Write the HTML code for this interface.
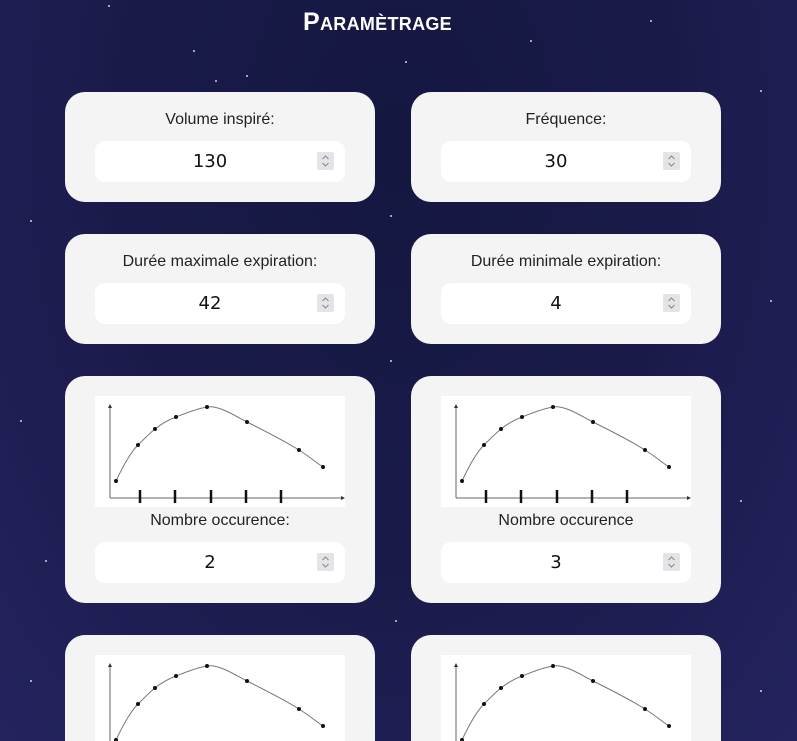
<!DOCTYPE html>
<html><head><meta charset="utf-8"><style>
html,body{margin:0;width:797px;height:741px;overflow:hidden}
body{background:radial-gradient(ellipse at 50% 20%,#141840 0%,#1a1a4a 50%,#24235e 100%);font-family:"Liberation Sans",sans-serif;position:relative}
h1{position:absolute;left:0;width:755px;text-align:center;top:8px;margin:0;color:#fff;font-size:25px;font-variant:small-caps;font-weight:bold;letter-spacing:0.3px}
.card{position:absolute;width:310px;background:#f4f4f4;border-radius:20px;overflow:hidden}
.lbl{text-align:center;font-size:16px;color:#222;position:absolute;left:0;right:0}
.inp{position:absolute;left:30px;width:230px;padding-right:20px;height:41px;background:#fff;border-radius:10px;text-align:center;line-height:41px;font-size:18px;color:#111;font-family:"DejaVu Sans",sans-serif}
.sp{position:absolute;right:11px;top:11px;width:17px;height:18px;background:#e4e4e8;border-radius:2px}
.sp svg{display:block}
.chart{position:absolute;left:30px;top:20px;width:250px;height:111px;background:#fff}
.s{position:absolute;width:2px;height:2px;background:#fff;border-radius:50%;opacity:.8}
</style></head><body>
<h1>Paramètrage</h1>
<div class="s" style="left:108px;top:5px"></div><div class="s" style="left:193px;top:50px"></div><div class="s" style="left:246px;top:75px"></div><div class="s" style="left:215px;top:80px"></div><div class="s" style="left:405px;top:61px"></div><div class="s" style="left:530px;top:40px"></div><div class="s" style="left:650px;top:20px"></div><div class="s" style="left:760px;top:90px"></div><div class="s" style="left:30px;top:220px"></div><div class="s" style="left:390px;top:215px"></div><div class="s" style="left:770px;top:300px"></div><div class="s" style="left:20px;top:420px"></div><div class="s" style="left:740px;top:500px"></div><div class="s" style="left:395px;top:620px"></div><div class="s" style="left:30px;top:680px"></div><div class="s" style="left:760px;top:690px"></div><div class="s" style="left:390px;top:360px"></div><div class="s" style="left:45px;top:560px"></div>

<svg width="0" height="0" style="position:absolute"><defs>
<symbol id="ch" viewBox="0 0 250 111">
<path d="M15 102V10M15 102H248" stroke="#666" stroke-width="1" fill="none"/>
<path d="M13 12l2-4 2 4zM246 100l4 2-4 2z" fill="#333"/>
<path d="M21 85C28 70 35 57 43 49S55 37 60 33S73 24 81 21S100 13 112 11S140 20 152 26S190 45 204 54S220 66 228 71" stroke="#777" fill="none"/>
<g fill="#111"><circle cx="21" cy="85" r="2"/><circle cx="43" cy="49" r="2"/><circle cx="60" cy="33" r="2"/><circle cx="81" cy="21" r="2"/><circle cx="112" cy="11" r="2"/><circle cx="152" cy="26" r="2"/><circle cx="204" cy="54" r="2"/><circle cx="228" cy="71" r="2"/></g>
<path d="M45 94v13M80 94v13M116 94v13M151 94v13M186 94v13" stroke="#111" stroke-width="2.5"/>
</symbol>
<symbol id="sp" viewBox="0 0 17 18"><path d="M5.5 7l3-3 3 3M5.5 11l3 3 3-3" stroke="#888" fill="none"/></symbol>
</defs></svg>

<div class="card" style="left:65px;top:92px;height:110px"><div class="lbl" style="top:19px">Volume inspiré:</div><div class="inp" style="top:49px">130<div class="sp"><svg width="17" height="18"><use href="#sp"/></svg></div></div></div>
<div class="card" style="left:411px;top:92px;height:110px"><div class="lbl" style="top:19px">Fréquence:</div><div class="inp" style="top:49px">30<div class="sp"><svg width="17" height="18"><use href="#sp"/></svg></div></div></div>
<div class="card" style="left:65px;top:234px;height:110px"><div class="lbl" style="top:19px">Durée maximale expiration:</div><div class="inp" style="top:49px">42<div class="sp"><svg width="17" height="18"><use href="#sp"/></svg></div></div></div>
<div class="card" style="left:411px;top:234px;height:110px"><div class="lbl" style="top:19px">Durée minimale expiration:</div><div class="inp" style="top:49px">4<div class="sp"><svg width="17" height="18"><use href="#sp"/></svg></div></div></div>

<div class="card" style="left:65px;top:376px;height:227px"><svg class="chart"><use href="#ch"/></svg><div class="lbl" style="top:136px">Nombre occurence:</div><div class="inp" style="top:166px">2<div class="sp"><svg width="17" height="18"><use href="#sp"/></svg></div></div></div>
<div class="card" style="left:411px;top:376px;height:227px"><svg class="chart"><use href="#ch"/></svg><div class="lbl" style="top:136px">Nombre occurence</div><div class="inp" style="top:166px">3<div class="sp"><svg width="17" height="18"><use href="#sp"/></svg></div></div></div>

<div class="card" style="left:65px;top:635px;height:106px;border-radius:20px 20px 0 0"><svg class="chart"><use href="#ch"/></svg></div>
<div class="card" style="left:411px;top:635px;height:106px;border-radius:20px 20px 0 0"><svg class="chart"><use href="#ch"/></svg></div>
</body></html>
